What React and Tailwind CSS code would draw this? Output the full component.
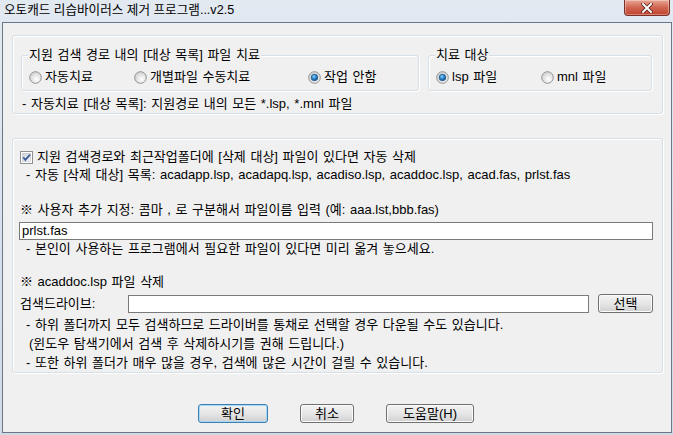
import React from "react";

const FONT = { fontFamily: '"Liberation Sans", "Noto Sans CJK KR", sans-serif' };

export default function App() {
  return (
    <div
      style={FONT}
      className="w-[673px] h-[435px] bg-gradient-to-b from-[#e2e9f1] to-[#cfdae6] text-[13px] [word-spacing:1px] text-black flex flex-col overflow-hidden"
    >
      {/* title bar */}
      <div className="h-[22px] flex items-center justify-between pl-[4px] pr-[3px]">
        <span className="text-[12.6px] [word-spacing:0px] leading-[14px] mt-[-2px]">
          오토캐드 리습바이러스 제거 프로그램...v2.5
        </span>
        <CloseButton />
      </div>

      {/* client area */}
      <div className="ml-[2px] w-[670px] h-[411px] border border-[#6b7786] bg-[#f0f0f0] flex flex-col">
        {/* panel 1 */}
        <Panel className="mt-[12px] h-[79px]">
          <div className="flex gap-[9px] mt-[19px] ml-[8px]">
            <Group label="지원 검색 경로 내의 [대상 목록] 파일 치료" className="w-[398px]">
              <Radio label="자동치료" className="w-[105px]" />
              <Radio label="개별파일 수동치료" className="w-[174px]" />
              <Radio label="작업 안함" checked />
            </Group>
            <Group label="치료 대상" className="w-[224px]">
              <Radio label="lsp 파일" checked className="w-[105px]" />
              <Radio label="mnl 파일" />
            </Group>
          </div>
          <div className="mt-[6px] ml-[9px] leading-[14px]">
            - 자동치료 [대상 목록]: 지원경로 내의 모든 *.lsp, *.mnl 파일
          </div>
        </Panel>

        {/* panel 2 */}
        <Panel className="mt-[24px] h-[235px]">
          <div className="mt-[11px] ml-[7px] h-[14px] flex items-center gap-[4px]">
            <CheckBox />
            <span className="leading-[14px]">
              지원 검색경로와 최근작업폴더에 [삭제 대상] 파일이 있다면 자동 삭제
            </span>
          </div>
          <div className="mt-[4px] ml-[13px] leading-[14px]">
            - 자동 [삭제 대상] 목록: acadapp.lsp, acadapq.lsp, acadiso.lsp, acaddoc.lsp, acad.fas, prlst.fas
          </div>
          <div className="mt-[21px] ml-[7px] leading-[14px]">
            ※ 사용자 추가 지정: 콤마 , 로 구분해서 파일이름 입력 (예: aaa.lst,bbb.fas)
          </div>
          <div className="mt-[5px] ml-[6px] w-[634px] h-[18px] border border-[#7a7a7a] bg-white flex items-center pl-[2px] leading-[14px]">
            prlst.fas
          </div>
          <div className="mt-[2px] ml-[13px] leading-[14px]">
            - 본인이 사용하는 프로그램에서 필요한 파일이 있다면 미리 옮겨 놓으세요.
          </div>
          <div className="mt-[19px] ml-[7px] leading-[14px]">※ acaddoc.lsp 파일 삭제</div>
          <div className="mt-[5px] ml-[7px] h-[19px] flex items-center">
            <span className="w-[108px] leading-[14px]">검색드라이브:</span>
            <div className="w-[461px] h-[18px] border border-[#7a7a7a] bg-white" />
            <Button className="ml-[9px] w-[55px]">선택</Button>
          </div>
          <div className="mt-[2px] leading-[19px]">
            <div className="ml-[13px]">- 하위 폴더까지 모두 검색하므로 드라이버를 통채로 선택할 경우 다운될 수도 있습니다.</div>
            <div className="ml-[16px]">(윈도우 탐색기에서 검색 후 삭제하시기를 권해 드립니다.)</div>
            <div className="ml-[13px]">- 또한 하위 폴더가 매우 많을 경우, 검색에 많은 시간이 걸릴 수 있습니다.</div>
          </div>
        </Panel>

        {/* bottom buttons */}
        <div className="mt-[31px] ml-[195px] flex gap-[32px]">
          <Button primary className="w-[70px]">확인</Button>
          <Button className="w-[54px]">취소</Button>
          <Button className="w-[88px]">도움말(H)</Button>
        </div>
      </div>
    </div>
  );
}

function Panel({ className, children }) {
  return (
    <div
      className={`ml-[9px] w-[651px] shrink-0 rounded-[3px] border border-[#d5dfe5] shadow-[inset_1px_1px_0_#fff,1px_1px_0_#fff] flex flex-col ${className}`}
    >
      {children}
    </div>
  );
}

function Group({ label, className, children }) {
  return (
    <div
      className={`relative h-[36px] rounded-[3px] border border-[#d5dfe5] shadow-[inset_1px_1px_0_#fff,1px_1px_0_#fff] ${className}`}
    >
      <span className="absolute left-[6px] top-[-8px] px-[1px] bg-[#f0f0f0] leading-[14px] whitespace-nowrap">
        {label}
      </span>
      <div className="mt-[14px] ml-[7px] h-[14px] flex items-center">{children}</div>
    </div>
  );
}

function Radio({ label, checked, className = "" }) {
  return (
    <div className={`flex items-center gap-[3px] ${className}`}>
      <svg width="13" height="13" viewBox="0 0 13 13" className="shrink-0">
        <defs>
          <radialGradient id="rg" cx="0.6" cy="0.65" r="0.6">
            <stop offset="0" stopColor="#ffffff" />
            <stop offset="1" stopColor="#d4d4d4" />
          </radialGradient>
          <radialGradient id="rb" cx="0.4" cy="0.35" r="0.7">
            <stop offset="0" stopColor="#8fd0f5" />
            <stop offset="0.5" stopColor="#2a86cc" />
            <stop offset="1" stopColor="#0f4f8e" />
          </radialGradient>
        </defs>
        <circle cx="6.5" cy="6.5" r="5.8" fill="url(#rg)" stroke="#929292" strokeWidth="1" />
        {checked && <circle cx="6.5" cy="6.5" r="3.3" fill="url(#rb)" stroke="#1d4f7e" strokeWidth="0.7" />}
      </svg>
      <span className="leading-[14px] whitespace-nowrap">{label}</span>
    </div>
  );
}

function CheckBox() {
  return (
    <svg width="13" height="13" viewBox="0 0 13 13" className="shrink-0">
      <defs>
        <linearGradient id="cg" x1="0" y1="0" x2="1" y2="1">
          <stop offset="0" stopColor="#cfd3da" />
          <stop offset="1" stopColor="#f7f7f7" />
        </linearGradient>
      </defs>
      <rect x="0.5" y="0.5" width="12" height="12" fill="#fff" stroke="#8e8f8f" />
      <rect x="2.5" y="2.5" width="8" height="8" fill="url(#cg)" stroke="#b7bcc4" strokeWidth="0.6" />
      <path d="M3.2 6.4 L5.4 8.8 L10 3.6" fill="none" stroke="#3b5b9c" strokeWidth="1.8" />
    </svg>
  );
}

function Button({ primary, className = "", children }) {
  return (
    <div
      className={`h-[19px] rounded-[3px] border flex items-center justify-center leading-[14px] bg-gradient-to-b from-[#f3f3f3] via-[#e6e6e6] to-[#d0d0d0] ${
        primary
          ? "border-[#3c7fb1] shadow-[inset_0_0_0_1px_#a6d8f5]"
          : "border-[#707070] shadow-[inset_0_0_0_1px_#fbfbfb]"
      } ${className}`}
    >
      {children}
    </div>
  );
}

function CloseButton() {
  return (
    <div className="self-start w-[46px] h-[16px] rounded-b-[4px] border border-t-0 border-[#7a2f25] bg-gradient-to-b from-[#e8a596] via-[#d06652] to-[#c0412c] flex items-center justify-center shadow-[inset_0_0_0_1px_rgba(255,255,255,0.35)]">
      <svg width="12" height="10" viewBox="0 0 12 10">
        <path d="M2 1 L10 9 M10 1 L2 9" stroke="#4b1a14" strokeWidth="3.4" strokeLinecap="square" />
        <path d="M2 1 L10 9 M10 1 L2 9" stroke="#ffffff" strokeWidth="2" strokeLinecap="square" />
      </svg>
    </div>
  );
}
